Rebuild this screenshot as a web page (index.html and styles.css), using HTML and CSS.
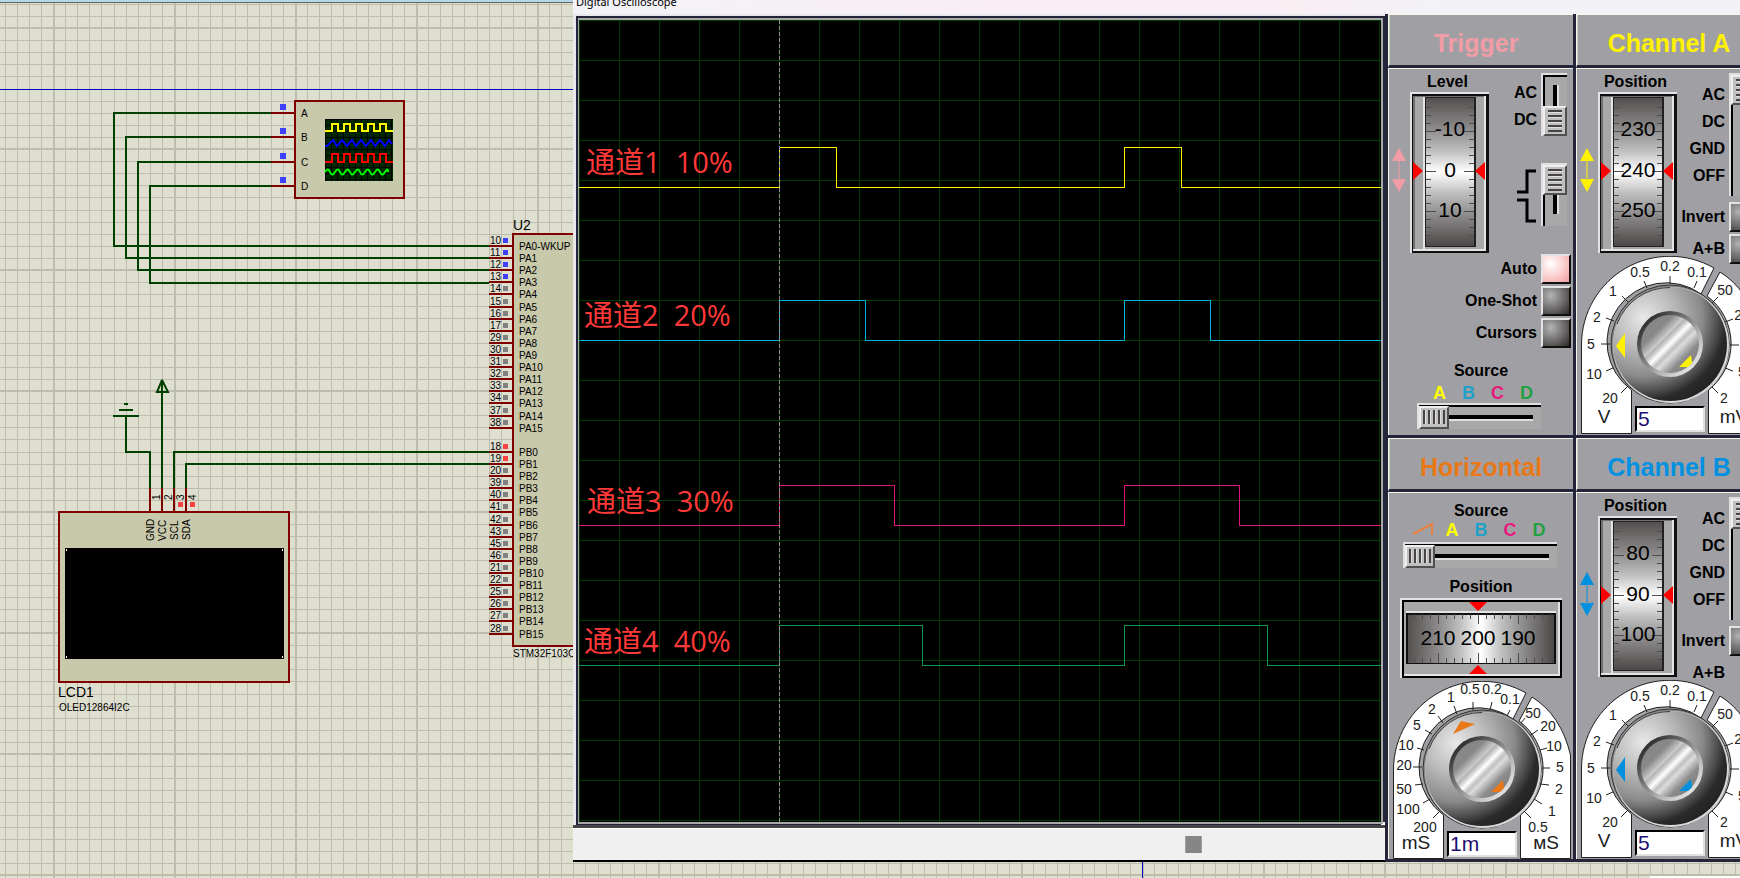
FILE: index.html
```html
<!DOCTYPE html>
<html lang="zh-CN">
<head>
<meta charset="utf-8">
<title>Digital Oscilloscope</title>
<link rel="stylesheet" href="styles.css">
</head>
<body>
<svg class="schematic" role="img" aria-label="Schematic">
  <defs>
    <pattern id="sheet-grid" x="53" y="27" width="121" height="121" patternUnits="userSpaceOnUse">
      <path class="grid-line" d="M12.5 0v121M24.5 0v121M36.5 0v121M48.5 0v121M61.5 0v121M73.5 0v121M85.5 0v121M97.5 0v121M109.5 0v121M0 13.5h121M0 25.5h121M0 37.5h121M0 49.5h121M0 62.5h121M0 74.5h121M0 86.5h121M0 98.5h121M0 110.5h121"/>
      <path class="grid-major" d="M1 0v121M0 1h121"/>
    </pattern>
    <pattern id="mini-grid" x="325" y="119" width="6" height="6" patternUnits="userSpaceOnUse">
      <path d="M0 0.5h6M0.5 0v6" stroke="#000"/>
    </pattern>
  </defs>
  <rect width="100%" height="100%" fill="url(#sheet-grid)"/>
  <rect class="toolbar-edge" width="100%" height="2"/>
  <rect class="toolbar-line" y="2" width="100%" height="1"/>
  <path class="sheet-border" d="M0 89.5h600M1142.5 850v28"/>

  <g class="wires">
    <path d="M271 113H114V246H489"/>
    <path d="M271 137H126V258H489"/>
    <path d="M271 162H138V270H489"/>
    <path d="M271 186H150V283H489"/>
    <path d="M489 452H174V488"/>
    <path d="M489 464H186V488"/>
    <path d="M162 488V380L157 392H168L162 380"/>
    <path d="M150 488V452H126V416M113 416H139M119 410H133M124 404H128"/>
  </g>
  <g class="leads">
    <path d="M271 113h24M271 137h24M271 162h24M271 186h24M150 488v24M162 488v24M174 488v24M186 488v24"/>
  </g>

  <rect class="part" x="295" y="101" width="109" height="97"/>
  <path class="probe-high" d="M280 104h6v6h-6zM280 128h6v6h-6zM280 153h6v6h-6zM280 177h6v6h-6z"/>
  <text x="301" y="117">A</text>
  <text x="301" y="141">B</text>
  <text x="301" y="166">C</text>
  <text x="301" y="190">D</text>
  <rect x="325" y="119" width="68" height="62" fill="#002800"/>
  <rect x="325" y="119" width="68" height="62" fill="url(#mini-grid)"/>
  <g class="mini-traces">
    <path stroke="#ffff00" d="M325 131h7v-7h6v7h6v-7h6v7h6v-7h6v7h6v-7h6v7h6v-7h6v7h7"/>
    <path stroke="#0000ff" d="M325 146h2l6-6 4 6 5-6 5 6 5-6 4 6 5-6 5 6 5-6 4 6 5-6 5 6 4-6 3 4"/>
    <path stroke="#ff0000" d="M325 162h7v-8h6v8h6v-8h6v8h6v-8h6v8h6v-8h6v8h6v-8h6v8h7"/>
    <path stroke="#00ff00" d="M325 172q3-5 5 0t5 0 5 0 5 0 5 0 5 0 5 0 5 0 5 0 5 0 5 0 5 0 3 0"/>
  </g>

  <rect class="part" x="59" y="512" width="230" height="170"/>
  <rect x="65" y="548" width="219" height="111"/>
  <path class="corner-dots" d="M66.5 549v2M282.5 549v2M66.5 656v2M282.5 656v2"/>
  <path class="probe-low" d="M178 502h5v5h-5zM190 502h5v5h-5z"/>
  <text transform="translate(160 500) rotate(-90)">1</text>
  <text transform="translate(172 500) rotate(-90)">2</text>
  <text transform="translate(184 500) rotate(-90)">3</text>
  <text transform="translate(196 500) rotate(-90)">4</text>
  <text transform="translate(154 541) rotate(-90)">GND</text>
  <text transform="translate(166 541) rotate(-90)">VCC</text>
  <text transform="translate(178 540) rotate(-90)">SCL</text>
  <text transform="translate(190 540) rotate(-90)">SDA</text>
  <text class="ref" x="58" y="697">LCD1</text>
  <text x="59" y="711">OLED12864I2C</text>

  <rect class="part" x="513" y="234" width="120" height="412"/>
  <g id="pins"></g>
  <text class="ref" x="513" y="230">U2</text>
  <text x="513" y="657">STM32F103C</text>
  <rect x="1650" y="876" width="90" height="2" fill="#fff"/>
</svg>

<svg class="defs" aria-hidden="true">
  <defs>
    <linearGradient id="wheel-v" x1="0" y1="0" x2="0" y2="1">
      <stop offset="0" stop-color="#545050"/><stop offset=".2" stop-color="#8a8888"/>
      <stop offset=".36" stop-color="#c0c0c0"/><stop offset=".5" stop-color="#fff"/>
      <stop offset=".64" stop-color="#c0c0c0"/><stop offset=".8" stop-color="#8a8888"/>
      <stop offset="1" stop-color="#4c4848"/>
    </linearGradient>
    <linearGradient id="wheel-h">
      <stop offset="0" stop-color="#545050"/><stop offset=".2" stop-color="#8a8888"/>
      <stop offset=".36" stop-color="#c0c0c0"/><stop offset=".5" stop-color="#fff"/>
      <stop offset=".64" stop-color="#c0c0c0"/><stop offset=".8" stop-color="#8a8888"/>
      <stop offset="1" stop-color="#4c4848"/>
    </linearGradient>
    <radialGradient id="knob-body" cx=".27" cy=".27" r=".86">
      <stop offset="0" stop-color="#e8e8e8"/><stop offset=".3" stop-color="#bdbdbd"/>
      <stop offset=".6" stop-color="#8a8a8a"/><stop offset=".84" stop-color="#2a2a2a"/>
      <stop offset="1" stop-color="#202020"/>
    </radialGradient>
    <linearGradient id="knob-rim" x1="0" y1="0" x2="1" y2="1">
      <stop offset=".1" stop-color="#222"/><stop offset=".35" stop-color="#666"/>
      <stop offset=".6" stop-color="#aaa"/><stop offset=".9" stop-color="#eee"/>
    </linearGradient>
    <linearGradient id="knob-cap" x1=".1" y1=".1" x2=".9" y2=".9">
      <stop offset="0" stop-color="#868686"/><stop offset=".22" stop-color="#888"/>
      <stop offset=".36" stop-color="#c8c8c8"/><stop offset=".4" stop-color="#b4b4b4"/>
      <stop offset=".5" stop-color="#fff"/><stop offset=".58" stop-color="#c0c0c0"/>
      <stop offset=".64" stop-color="#dcdcdc"/><stop offset=".8" stop-color="#8c8c8c"/>
      <stop offset="1" stop-color="#808080"/>
    </linearGradient>
    <g id="wheel-frame">
      <path fill="#e4e4e4" d="M0 0h79v161H0z"/>
      <path fill="#101010" d="M2 2h77v159H2z"/>
      <path fill="#707070" d="M3 4h73v154H3z"/>
      <path fill="#a8a8a8" d="M5 5h69v152H5z"/>
      <path fill="#e4e4e4" d="M13 5h2v152h-2zM74 4h2v155H3v-2h71z"/>
      <path fill="#202020" d="M15 5h51v150H15z"/>
      <path fill="url(#wheel-v)" d="M16 6h48v148H16z"/>
      <path class="tick" stroke-width="5" stroke-dasharray="1 7" d="M18.500 15v139M61.500 15v139"/>
      <path class="tick" stroke-width="10" stroke-dasharray="1 39" d="M21 39v100M59 39v100"/>
      <path fill="#f00" d="M3 70l10 9-10 9zM75 70l-10 9 10 9z"/>
    </g>
    <g id="knob">
      <path class="plate" d="M.5 177.500V88A88.500 88.500 0 0 1 133 12L120 38A59 59 0 0 0 50.500 134V177.500z"/>
      <path class="plate" d="M127.500 177.500V134A59 59 0 0 0 126 40L139 16Q168 34 177.500 74V177.500z"/>
      <circle cx="89" cy="88" r="59" fill="#8c8c8c" stroke="#303030"/>
      <circle cx="90" cy="89" r="58" fill="#d8d8d8"/>
      <circle cx="89" cy="88" r="57" fill="url(#knob-body)"/>
      <path d="M36 68A56 56 0 0 1 89 31.500" fill="none" stroke="#383838"/>
      <circle cx="89" cy="88" r="33" fill="url(#knob-rim)"/>
      <circle cx="89" cy="88" r="29" fill="url(#knob-cap)"/>
    </g>
    <g id="channel-scale">
      <path class="dial-tick" d="M89 20v8M63 25l3 7M41 40l6 6M25 62l8 3M20 88h9M25 115l7-3M40 137l6-6M116 25l-3 7M137 41l-6 6M152 63l-8 3M149 89h9M144 112l8 3M131 131l6 6"/>
      <g class="dial-text">
        <text x="89" y="15">0.2</text><text x="59" y="21">0.5</text><text x="116" y="21">0.1</text>
        <text x="32" y="40">1</text><text x="16" y="66">2</text><text x="10" y="93">5</text>
        <text x="13" y="123">10</text><text x="29" y="147">20</text><text x="144" y="39">50</text>
        <text x="161" y="64">20</text><text x="168" y="94">10</text><text x="161" y="121">5</text><text x="143" y="147">2</text>
      </g>
      <g class="unit-text"><text x="23" y="167">V</text><text x="153" y="167">mV</text></g>
    </g>
    <g id="updown">
      <path fill="currentColor" d="M7 0l7 13H0zM7 44l7-13H0zM6.500 12h1v20h-1z"/>
    </g>
  </defs>
</svg>

<main class="window">
  <header class="titlebar"><h1>Digital Oscilloscope</h1></header>
  <div class="workspace">
    <section class="display">
      <div class="frame">
        <svg class="plot" role="img" aria-label="Four PWM traces">
          <defs>
            <pattern id="plot-grid" width="40" height="40" patternUnits="userSpaceOnUse">
              <path d="M0 .5h40M.5 0v40" stroke="#003c00"/>
            </pattern>
          </defs>
          <rect width="100%" height="100%" fill="url(#plot-grid)"/>
          <g class="traces">
            <path stroke="#fff200" d="M0 167.500H200.500V127.500H257.500V167.500H545.500V127.500H602.500V167.500H2000"/>
            <path stroke="#00b4dc" d="M0 320.500H200.500V280.500H286.500V320.500H545.500V280.500H631.500V320.500H2000"/>
            <path stroke="#e0147c" d="M0 505.500H200.500V465.500H315.500V505.500H545.500V465.500H660.500V505.500H2000"/>
            <path stroke="#109850" d="M0 645.500H200.500V605.500H343.500V645.500H545.500V605.500H688.500V645.500H2000"/>
            <path stroke="#909090" stroke-dasharray="4 2" d="M200.500 0V2000"/>
          </g>
          <g class="trace-labels">
            <text x="7" y="153">通道1  10%</text>
            <text x="5" y="306">通道2  20%</text>
            <text x="8" y="492">通道3  30%</text>
            <text x="5" y="632">通道4  40%</text>
          </g>
        </svg>
      </div>
      <footer class="strip"><span class="strip-mark"></span></footer>
    </section>

    <section class="controls">
      <section class="module trigger">
        <h2>Trigger</h2>
        <div class="panel">
          <div class="upper">
            <div class="gauge">
              <span class="caption">Level</span>
              <svg class="updown" viewBox="0 0 14 44"><use href="#updown"/></svg>
              <svg class="wheel" viewBox="0 0 79 161" role="slider" aria-label="Level" aria-valuenow="0">
                <use href="#wheel-frame"/>
                <text x="40" y="44">-10</text><text x="40" y="85">0</text><text x="40" y="125">10</text>
              </svg>
            </div>
            <div class="side">
              <label class="options two" for="trigger-coupling"><span>AC</span><span>DC</span></label>
              <input class="vswitch short" id="trigger-coupling" type="range" min="0" max="1" value="1">
              <label class="edges" for="trigger-edge" aria-label="Edge">
                <svg viewBox="0 0 20 54"><path d="M19 2h-9v21H0M0 31h10v21h9" fill="none" stroke="#000" stroke-width="3"/></svg>
              </label>
              <input class="vswitch short" id="trigger-edge" type="range" min="0" max="1" value="0">
            </div>
          </div>
          <div class="push-list">
            <label for="auto">Auto</label><button class="push lit" id="auto" type="button"></button>
            <label for="one-shot">One-Shot</label><button class="push" id="one-shot" type="button"></button>
            <label for="cursors">Cursors</label><button class="push" id="cursors" type="button"></button>
          </div>
          <label class="caption source" for="trigger-source">Source</label>
          <div class="letters"><span class="a">A</span><span class="b">B</span><span class="c">C</span><span class="d">D</span></div>
          <input class="hswitch" id="trigger-source" type="range" min="0" max="3" value="0">
        </div>
      </section>

      <section class="module channel-a">
        <h2>Channel A</h2>
        <div class="panel">
          <div class="upper">
            <div class="gauge">
              <span class="caption">Position</span>
              <svg class="updown" viewBox="0 0 14 44"><use href="#updown"/></svg>
              <svg class="wheel" viewBox="0 0 79 161" role="slider" aria-label="Channel A position" aria-valuenow="240">
                <use href="#wheel-frame"/>
                <text x="40" y="44">230</text><text x="40" y="85">240</text><text x="40" y="125">250</text>
              </svg>
            </div>
            <div class="side channel-side">
              <label class="options four" for="a-coupling"><span>AC</span><span>DC</span><span>GND</span><span>OFF</span></label>
              <input class="vswitch long" id="a-coupling" type="range" min="0" max="3" value="0">
              <label for="a-invert">Invert</label><button class="push" id="a-invert" type="button"></button>
              <label for="a-sum">A+B</label><button class="push" id="a-sum" type="button"></button>
            </div>
          </div>
          <div class="dial">
            <svg viewBox="0 0 178 178">
              <use href="#knob"/><use href="#channel-scale"/>
              <path fill="currentColor" d="M35 90l9-13v25zM110 99L98 111h9l4-4z"/>
            </svg>
            <input type="text" aria-label="Channel A scale" value="5">
          </div>
        </div>
      </section>

      <section class="module horizontal">
        <h2>Horizontal</h2>
        <div class="panel">
          <label class="caption" for="time-source">Source</label>
          <div class="letters">
            <svg class="ramp" viewBox="0 0 22 14"><path d="M1 12L20 2v11" fill="none" stroke="#e88040" stroke-width="2"/></svg>
            <span class="a">A</span><span class="b">B</span><span class="c">C</span><span class="d">D</span>
          </div>
          <input class="hswitch wide" id="time-source" type="range" min="0" max="4" value="0">
          <span class="caption position">Position</span>
          <svg class="hwheel" viewBox="0 0 162 80" role="slider" aria-label="Horizontal position" aria-valuenow="200">
            <path fill="#e4e4e4" d="M0 0h162v80H0z"/>
            <path fill="#000" d="M2 2h160v78H2z"/>
            <path fill="#e4e4e4" d="M4 4h156v74H4z"/>
            <path fill="#a8a8a8" d="M4 4h154v72H4z"/>
            <path fill="#e4e4e4" d="M6 13h150v2H6z"/>
            <path fill="#101010" d="M6 15h150v51H6z"/>
            <path fill="url(#wheel-h)" d="M8 17h146v48H8z"/>
            <path class="tick" stroke-width="5" stroke-dasharray="1 7" d="M14 18.500h140M14 62.500h140"/>
            <path class="tick" stroke-width="10" stroke-dasharray="1 39" d="M38 21h110M38 60h110"/>
            <path fill="#f00" d="M69 4h18l-9 9zM69 76h18l-9-9z"/>
            <text x="38" y="47">210</text><text x="78" y="47">200</text><text x="118" y="47">190</text>
          </svg>
          <div class="dial">
            <svg viewBox="0 0 178 178">
              <use href="#knob"/>
              <path class="dial-tick" d="M80 21v8M99 21l-2 8M117 29l-3 6M61 25l3 8M45 35l5 7M32 49l7 4M24 67l7 2M20 86h9M22 104l8-1M30 122l7-4M40 137l6-6M132 37l-4 5M145 49l-7 5M154 67l-7 2M157 87h-8M156 104l-9-1M149 123l-8-5M138 137l-6-6"/>
              <g class="dial-text">
                <text x="77" y="13">0.5</text><text x="99" y="13">0.2</text><text x="117" y="23">0.1</text>
                <text x="58" y="21">1</text><text x="39" y="33">2</text><text x="24" y="49">5</text>
                <text x="13" y="69">10</text><text x="11" y="89">20</text><text x="11" y="113">50</text>
                <text x="15" y="133">100</text><text x="32" y="151">200</text><text x="140" y="37">50</text>
                <text x="155" y="50">20</text><text x="161" y="70">10</text><text x="167" y="91">5</text>
                <text x="166" y="113">2</text><text x="159" y="135">1</text><text x="145" y="151">0.5</text>
              </g>
              <g class="unit-text"><text x="23" y="168">mS</text><text x="153" y="168">мS</text></g>
              <path fill="currentColor" d="M68 40l14 3-22 10zM110 99L98 111h9l4-4z"/>
            </svg>
            <input type="text" aria-label="Time base" value="1m">
          </div>
        </div>
      </section>

      <section class="module channel-b">
        <h2>Channel B</h2>
        <div class="panel">
          <div class="upper">
            <div class="gauge">
              <span class="caption">Position</span>
              <svg class="updown" viewBox="0 0 14 44"><use href="#updown"/></svg>
              <svg class="wheel" viewBox="0 0 79 161" role="slider" aria-label="Channel B position" aria-valuenow="90">
                <use href="#wheel-frame"/>
                <text x="40" y="44">80</text><text x="40" y="85">90</text><text x="40" y="125">100</text>
              </svg>
            </div>
            <div class="side channel-side">
              <label class="options four" for="b-coupling"><span>AC</span><span>DC</span><span>GND</span><span>OFF</span></label>
              <input class="vswitch long" id="b-coupling" type="range" min="0" max="3" value="0">
              <label for="b-invert">Invert</label><button class="push" id="b-invert" type="button"></button>
              <span class="side-note">A+B</span>
            </div>
          </div>
          <div class="dial">
            <svg viewBox="0 0 178 178">
              <use href="#knob"/><use href="#channel-scale"/>
              <path fill="currentColor" d="M35 90l9-13v25zM110 99L98 111h9l4-4z"/>
            </svg>
            <input type="text" aria-label="Channel B scale" value="5">
          </div>
        </div>
      </section>
    </section>
  </div>
</main>
<script src="script.js"></script>
</body>
</html>
```
FILE: styles.css
```css
* { box-sizing: border-box; }

body {
  margin: 0;
  min-height: 100vh;
  overflow: hidden;
  background: #dfdfd0;
  font-family: "Liberation Sans", Arial, sans-serif;
  font-size: 16px;
  line-height: 20px;
  color: #000;
}

/* Schematic sheet */
.schematic { position: absolute; width: 100%; height: 100%; font-size: 10px; }
.defs { position: absolute; width: 0; height: 0; }
.grid-line { stroke: #bdbdae; }
.grid-major { stroke: #bdbdae; stroke-width: 2; }
.toolbar-edge { fill: #b4d6e8; }
.toolbar-line { fill: #606868; }
.sheet-border { stroke: #0000c0; }
.wires { fill: none; stroke: #004000; stroke-width: 2; }
.leads { fill: none; stroke: #800000; stroke-width: 2; }
.part { fill: #c8c8aa; stroke: #800000; stroke-width: 2; }
.probe-high { fill: #4040ff; }
.probe-low { fill: #ff4040; }
.probe-idle { fill: #808080; }
.corner-dots { stroke: #fff; }
.mini-traces { fill: none; stroke-width: 2; }
.ref { font-size: 14px; }

/* Oscilloscope window */
.window {
  position: absolute;
  top: 0;
  left: 573px;
  right: 0;
  overflow: hidden;
  background: #f0f0f0;
}
.titlebar {
  height: 14px;
  overflow: hidden;
  background: linear-gradient(90deg, #f2f2f8, #f9eef3 40%, #f9eef3 60%, #f2f2f6 75%);
}
.titlebar h1 {
  margin: -6px 0 0 3px;
  font: 11px/16px "Noto Sans", sans-serif;
}
.workspace { display: flex; }
.display { flex: 1; min-width: 0; display: flex; flex-direction: column; }
.frame {
  flex: 1;
  display: flex;
  padding: 2px 0 0 3px;
  background: #e8e8ea;
}
.plot {
  flex: 1;
  min-width: 0;
  height: auto;
  margin: 2px 2px 1px 2px;
  background: #000;
  border: solid #a8a8a8;
  border-width: 2px 2px 2px 1px;
  box-shadow: -2px -2px 0 0 #23253a, 2px -2px 0 0 #23253a, -2px 1px 0 0 #23253a, 2px 1px 0 0 #fffff8;
}
.traces { fill: none; shape-rendering: crispEdges; }
.trace-labels {
  fill: #ff3838;
  font-family: "Open Sans", "Noto Sans CJK SC", sans-serif;
  font-size: 29px;
}
.trace-labels text { white-space: pre; }
.strip {
  height: 37px;
  padding: 8px 183px;
  display: flex;
  justify-content: flex-end;
  background: #f0f0f0;
  border-top: 3px solid #444;
  border-bottom: 2px solid #000;
  box-shadow: inset 0 1px 0 #fff;
}
.strip-mark { width: 17px; height: 17px; background: #868686; border: 1px solid #a0a0a0; border-width: 0 1px; }

/* Control modules */
.controls {
  display: grid;
  grid-template-columns: 188px 164px;
  border-left: 3px solid #24243a;
}
.module {
  width: 188px;
  height: 424px;
  display: flex;
  flex-direction: column;
  background: #a0a0a4;
  border: solid #24243a;
  border-width: 0 3px 3px 0;
}
.module h2 {
  height: 54px;
  margin: 0;
  padding-top: 7px;
  border: solid;
  border-color: #f4f6ea transparent #24243a #f4f6ea;
  border-width: 1px 0 3px 1px;
  box-shadow: inset 1px 0 0 #c8d0c4;
  font-size: 25px;
  line-height: 42px;
  text-align: center;
}
.panel {
  flex: 1;
  display: flex;
  flex-direction: column;
  padding-top: 3px;
  border: solid #f4f6ea;
  border-width: 1px 0 0 1px;
}
.trigger { color: #f29ca6; }
.trigger h2 { padding-right: 10px; }
.channel-a { color: #fff200; }
.horizontal { color: #e87818; }
.channel-b { color: #0090e0; }
.panel label, .caption, .side-note { color: #000; font-weight: bold; }
.caption { text-align: center; }

.upper { display: flex; height: 181px; }
.gauge {
  display: grid;
  grid-template: 20px 161px / 21px 79px;
  align-items: center;
}
.gauge .caption { grid-column: 2; white-space: nowrap; justify-self: center; margin-right: 4px; }
.updown { width: 14px; height: 44px; margin: 0 0 6px 3px; }
.wheel, .hwheel {
  display: block;
  font-size: 21px;
  text-anchor: middle;
}
.wheel { width: 79px; height: 161px; }
.hwheel { width: 162px; height: 80px; align-self: center; flex: none; }
.tick { stroke: #504c4c; fill: none; }

.side {
  flex: 1;
  display: grid;
  grid-template-columns: 1fr 30px;
  column-gap: 4px;
  row-gap: 27px;
  align-content: start;
  text-align: right;
  padding: 1px 2px 0 0;
}
.channel-side { row-gap: 2px; }
.options { line-height: 27px; display: flex; flex-direction: column; padding-top: 6px; }
.options.four { padding-top: 8px; }
.edges { padding-top: 6px; }
.edges svg { width: 20px; height: 54px; }
.channel-side label:not(.options), .side-note { line-height: 30px; white-space: nowrap; justify-self: end; }
.channel-side .long { margin-bottom: 4px; }

.vswitch, .hswitch {
  appearance: none;
  margin: 0;
  border: solid #e0e0e0;
  border-width: 2px 0 0 2px;
  background-color: #a8a8a8;
  background-repeat: no-repeat;
}
.vswitch {
  writing-mode: vertical-lr;
  width: 26px;
  box-shadow: inset 2px 2px 0 #000;
  background-image: linear-gradient(90deg, #000 4px, #e0e0e0 4px);
  background-size: 6px calc(100% - 22px);
  background-position: 10px 10px;
}
.short { height: 63px; }
.long { height: 123px; }
.hswitch {
  align-self: center;
  flex: none;
  width: 124px;
  height: 26px;
  margin-right: 4px;
  box-shadow: inset 0 2px 0 #000;
  background-image: linear-gradient(#000 4px, #e0e0e0 4px);
  background-size: calc(100% - 20px) 6px;
  background-position: 12px 10px;
}
.hswitch.wide { width: 154px; margin: 2px 2px 0 0; }
.vswitch::-webkit-slider-thumb, .hswitch::-webkit-slider-thumb {
  appearance: none;
  border: 2px solid;
  border-color: #eee #505050 #505050 #eee;
}
.vswitch::-webkit-slider-thumb {
  width: 24px;
  height: 30px;
  background:
    repeating-linear-gradient(#484444 0 2px, #e0e0e0 2px 3px, #c0c0c0 3px 5px) center / 14px 22px no-repeat,
    #c0c0c0;
}
.hswitch::-webkit-slider-thumb {
  width: 30px;
  height: 23px;
  background:
    repeating-linear-gradient(90deg, #484444 0 2px, #e0e0e0 2px 3px, #c0c0c0 3px 5px) center / 22px 14px no-repeat,
    #c0c0c0;
}

.push {
  width: 30px;
  height: 30px;
  padding: 0;
  border: 2px solid;
  border-color: #e4e4e4 #101010 #101010 #e4e4e4;
  background: radial-gradient(circle at 30% 30%, #b4b4b4, #787676 45%, #2c2828);
}
.push.lit { background: radial-gradient(circle at 30% 30%, #fff, #fbd0d0 50%, #f09c9c); }
.push-list {
  display: grid;
  grid-template-columns: 1fr 30px;
  gap: 2px 4px;
  align-items: center;
  text-align: right;
  padding: 1px 2px 0 0;
}
.source { margin-top: 13px; }
.letters {
  display: grid;
  grid-auto-flow: column;
  grid-auto-columns: 29px;
  justify-content: center;
  justify-items: center;
  height: 22px;
  padding-left: 4px;
  line-height: 24px;
  font-size: 18px;
  font-weight: bold;
}
.ramp { width: 22px; height: 14px; margin-top: 3px; }
.a { color: #ff0; }
.b { color: #20a0c8; }
.c { color: #e8187c; }
.d { color: #20a040; }
.horizontal .panel { padding-top: 8px; }
.horizontal .letters { height: 19px; padding-left: 0; line-height: 18px; }
.horizontal .ramp { margin-top: 1px; }
.position { margin: 9px 0 1px; }

.dial {
  display: grid;
  justify-content: center;
  margin-top: 3px;
  padding-left: 2px;
}
.dial > * { grid-area: 1 / 1; }
.dial svg { width: 178px; height: 178px; }
.dial input {
  align-self: end;
  justify-self: center;
  width: 70px;
  height: 26px;
  margin-bottom: 2px;
  padding: 0 1px;
  border: 2px solid;
  border-color: #000 #e0e0e0 #e0e0e0 #000;
  background: #fff;
  color: #1c1070;
  font: 21px/22px "Liberation Sans", Arial, sans-serif;
}
.plate { fill: #fff; stroke: #202020; }
.dial-tick { fill: none; stroke: #202020; }
.dial-text, .unit-text { fill: #202020; text-anchor: middle; font-size: 14px; }
.unit-text { font-size: 19px; }
.wheel text, .hwheel text { fill: #000; }
```
FILE: script.js
```js
// Pin number of each row on the left side of U2; null leaves an empty row.
const pinNumbers = [
  10, 11, 12, 13, 14, 15, 16, 17, 29, 30, 31, 32, 33, 34, 37, 38, null,
  18, 19, 20, 39, 40, 41, 42, 43, 45, 46, 21, 22, 25, 26, 27, 28
];
const high = [10, 11, 12, 13];
const low = [18, 19];

document.getElementById("pins").innerHTML = pinNumbers.map((number, row) => {
  if (number === null) return "";
  const y = Math.round(246 + row * 12.11);
  const name = row < 16 ? (row === 0 ? "PA0-WKUP" : "PA" + row) : "PB" + (row - 17);
  const state = high.includes(number) ? "probe-high" : low.includes(number) ? "probe-low" : "probe-idle";
  return `<path class="leads" d="M489 ${y}h24"/>
    <rect class="${state}" x="503" y="${y - 8}" width="5" height="5"/>
    <text x="490" y="${y - 2}">${number}</text>
    <text x="519" y="${y + 4}">${name}</text>`;
}).join("");
```
